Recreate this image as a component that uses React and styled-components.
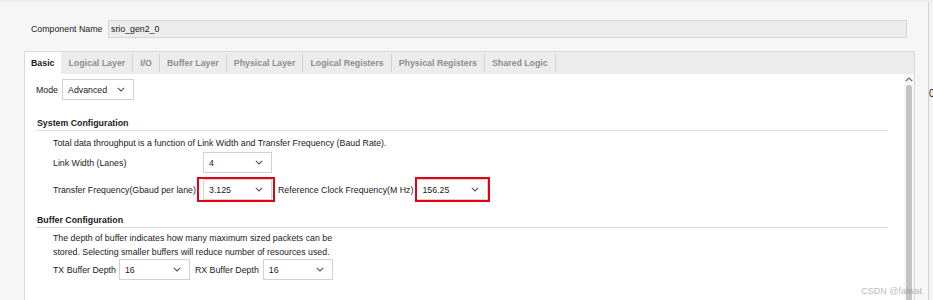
import React from 'react';
import styled, { createGlobalStyle } from 'styled-components';

const GlobalStyle = createGlobalStyle`
  html, body {
    margin: 0;
    padding: 0;
    background: #f6f6f6;
    overflow: hidden;
  }
  body {
    font-family: "Liberation Sans", Arial, sans-serif;
    font-size: 8.8px;
    color: #1a1a1a;
  }
`;

const Page = styled.div`
  display: flex;
  height: 300px;
  border-top: 2px solid #ececec;
  box-sizing: border-box;
  position: relative;
`;

const Main = styled.div`
  flex: 0 0 928px;
  display: flex;
  flex-direction: column;
`;

const SideStrip = styled.div`
  flex: 1;
  border-left: 1px solid #d2d2d2;
  background: #f3f3f3;
  padding-top: 86px;
  font-size: 10px;
  color: #222;
  overflow: hidden;
`;

const NameRow = styled.div`
  display: flex;
  align-items: center;
  margin: 18px 21px 0 31px;
  height: 18px;
`;

const NameLabel = styled.span`
  width: 77px;
  flex: none;
`;

const NameInput = styled.div`
  flex: 1;
  height: 16px;
  line-height: 16px;
  background: #ececec;
  border: 1px solid #d6d6d6;
  padding-left: 2px;
`;

const Panel = styled.div`
  margin: 13px 0 0 24px;
  width: 889px;
  flex: 1;
  border: 1px solid #d9d9d9;
  border-bottom: none;
  background: #ececec;
  display: flex;
  flex-direction: column;
`;

const TabBar = styled.div`
  display: flex;
  height: 22px;
`;

const Tab = styled.div`
  padding: 0 ${p => (p.$active ? 6 : 7)}px;
  margin: ${p => (p.$active ? 0 : 2)}px 0;
  line-height: ${p => (p.$active ? 22 : 18)}px;
  background: ${p => (p.$active ? '#fff' : 'transparent')};
  border-right: 1px solid ${p => (p.$active ? 'transparent' : '#d2d2d2')};
  font-weight: bold;
  color: ${p => (p.$active ? '#1a1a1a' : '#8e8e8e')};
  white-space: nowrap;
`;

const Body = styled.div`
  flex: 1;
  display: flex;
  background: #fff;
`;

const Content = styled.div`
  flex: 1;
  padding: 5px 16px 0 11px;
`;

const ScrollTrack = styled.div`
  flex: 0 0 10px;
  background: #f7f7f7;
  display: flex;
  flex-direction: column;
  align-items: center;
`;

const ScrollArrow = styled.svg`
  margin-top: 3px;
  flex: none;
`;

const ScrollThumb = styled.div`
  margin-top: 3px;
  width: 6px;
  flex: 1;
  background: #c4c4c4;
  border-radius: 3px 3px 0 0;
`;

const Row = styled.div`
  display: flex;
  align-items: center;
  height: 21px;
  margin-top: ${p => p.$mt || 0}px;
  padding-left: ${p => p.$indent || 0}px;
`;

const Label = styled.span`
  white-space: nowrap;
  width: ${p => (p.$w ? `${p.$w}px` : 'auto')};
  margin-right: ${p => p.$gap || 0}px;
  flex: none;
`;

const SelectBox = styled.div`
  position: relative;
  box-sizing: border-box;
  width: ${p => p.$w}px;
  height: 21px;
  border: 1px solid #d2d2d2;
  background: #fff;
  display: flex;
  align-items: center;
  justify-content: space-between;
  padding: 0 8px 0 5px;
  margin-right: ${p => p.$gap || 0}px;
  flex: none;

  ${p => p.$mark && `
    &::after {
      content: '';
      position: absolute;
      top: ${p.$mark[0]}px;
      right: ${p.$mark[1]}px;
      bottom: ${p.$mark[2]}px;
      left: ${p.$mark[3]}px;
      border: 2px solid #e60012;
      pointer-events: none;
    }
  `}
`;

const SectionTitle = styled.div`
  font-weight: bold;
  margin-top: ${p => p.$mt}px;
  padding-left: 1px;
  line-height: 12px;
  padding-bottom: 1px;
  border-bottom: 1px solid #dcdcdc;
`;

const Text = styled.div`
  padding-left: 17px;
  line-height: ${p => p.$lh || 12}px;
  margin-top: ${p => p.$mt || 0}px;
`;

const Watermark = styled.div`
  position: absolute;
  right: 11px;
  bottom: 4px;
  font-size: 9px;
  color: rgba(120, 120, 120, 0.55);
`;

const Chevron = () => (
  <svg width="8" height="5" viewBox="0 0 8 5">
    <polyline points="0.8,0.8 4,4 7.2,0.8" fill="none" stroke="#555" strokeWidth="1.1" />
  </svg>
);

const Select = ({ value, width, gap, mark }) => (
  <SelectBox $w={width} $gap={gap} $mark={mark}>
    <span>{value}</span>
    <Chevron />
  </SelectBox>
);

const tabs = [
  'Basic',
  'Logical Layer',
  'I/O',
  'Buffer Layer',
  'Physical Layer',
  'Logical Registers',
  'Physical Registers',
  'Shared Logic',
];

export default function App() {
  return (
    <>
      <GlobalStyle />
      <Page>
        <Main>
          <NameRow>
            <NameLabel>Component Name</NameLabel>
            <NameInput>srio_gen2_0</NameInput>
          </NameRow>
          <Panel>
            <TabBar>
              {tabs.map((t, i) => (
                <Tab key={t} $active={i === 0}>{t}</Tab>
              ))}
            </TabBar>
            <Body>
              <Content>
                <Row>
                  <Label $gap={4}>Mode</Label>
                  <Select value="Advanced" width={72} />
                </Row>

                <SectionTitle $mt={17}>System Configuration</SectionTitle>
                <Text $mt={6}>
                  Total data throughput is a function of Link Width and Transfer Frequency (Baud Rate).
                </Text>
                <Row $mt={3} $indent={17}>
                  <Label $w={150}>Link Width (Lanes)</Label>
                  <Select value="4" width={69} />
                </Row>
                <Row $mt={6} $indent={17}>
                  <Label $w={150}>Transfer Frequency(Gbaud per lane)</Label>
                  <Select value="3.125" width={69} gap={6} mark={[-3, -4, -3, -7]} />
                  <Label $gap={3}>Reference Clock Frequency(M Hz)</Label>
                  <Select value="156.25" width={72} mark={[-3, -3, -3, -2]} />
                </Row>

                <SectionTitle $mt={14}>Buffer Configuration</SectionTitle>
                <Text $mt={3} $lh={14}>
                  The depth of buffer indicates how many maximum sized packets can be
                  <br />
                  stored. Selecting smaller buffers will reduce number of resources used.
                </Text>
                <Row $indent={17}>
                  <Label $gap={3}>TX Buffer Depth</Label>
                  <Select value="16" width={71} gap={5} />
                  <Label $gap={4}>RX Buffer Depth</Label>
                  <Select value="16" width={70} />
                </Row>
              </Content>
              <ScrollTrack>
                <ScrollArrow width="8" height="5" viewBox="0 0 8 5">
                  <polyline points="0.8,4.2 4,1 7.2,4.2" fill="none" stroke="#666" strokeWidth="1.1" />
                </ScrollArrow>
                <ScrollThumb />
              </ScrollTrack>
            </Body>
          </Panel>
        </Main>
        <SideStrip>0</SideStrip>
        <Watermark>CSDN @falwat</Watermark>
      </Page>
    </>
  );
}
